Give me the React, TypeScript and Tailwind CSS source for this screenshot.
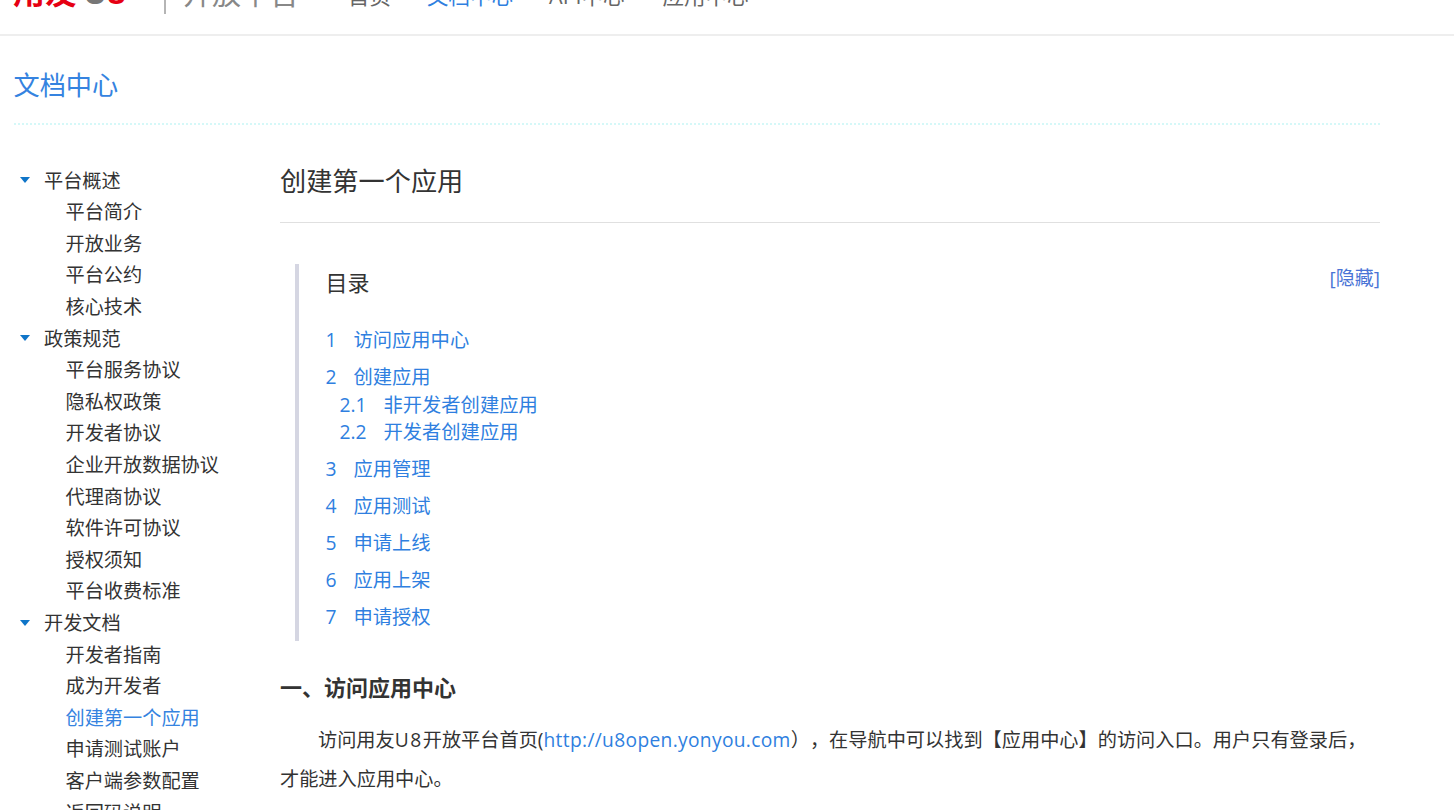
const font = "font-['Open_Sans','Noto_Sans_CJK_SC',sans-serif]"

const navItems = [
  { name: '首页', cls: 'mr-[36px]' },
  { name: '文档中心', cls: 'text-[#2f7fe0] mr-[36px]' },
  { name: 'API中心', cls: 'mr-[38px]' },
  { name: '应用中心', cls: '' },
]

const sideGroups = [
  { title: '平台概述', items: ['平台简介', '开放业务', '平台公约', '核心技术'] },
  { title: '政策规范', items: ['平台服务协议', '隐私权政策', '开发者协议', '企业开放数据协议', '代理商协议', '软件许可协议', '授权须知', '平台收费标准'] },
  { title: '开发文档', items: ['开发者指南', '成为开发者', '创建第一个应用', '申请测试账户', '客户端参数配置', '返回码说明'] },
]

const tocItems = [
  { no: '1', name: '访问应用中心', cls: 'h-[37px]' },
  { no: '2', name: '创建应用', cls: 'h-[28px] mt-[4px]' },
  { no: '2.1', name: '非开发者创建应用', sub: true, cls: 'h-[26px] mt-[1px]' },
  { no: '2.2', name: '开发者创建应用', sub: true, cls: 'h-[28px]' },
  { no: '3', name: '应用管理', cls: 'h-[38px] mt-[4px]' },
  { no: '4', name: '应用测试', cls: 'h-[37px]' },
  { no: '5', name: '申请上线', cls: 'h-[37px]' },
  { no: '6', name: '应用上架', cls: 'h-[37px]' },
  { no: '7', name: '申请授权', cls: 'h-[37px]' },
]

function Header() {
  return (
    <div className="h-[36px] border-b-2 border-[#eeeeee] overflow-hidden">
      {/* page is scrolled, only the lower part of the header row shows */}
      <div className="flex items-center h-[48px] -mt-[29px] pl-[13px]">
        <div className="w-[151px] flex items-center text-[32px] font-bold leading-none -mt-[6px]">
          <span className="text-[#e60012]">用友</span>
          <span className="text-[#777777] ml-[6px]">U</span>
          <span className="text-[#e60012]">8</span>
        </div>
        <div className="w-[2px] h-[38px] bg-[#b5b5b5]"></div>
        <div className="ml-[17px] w-[165px] text-[29px] text-[#888888] leading-none -mt-[3px]">开放平台</div>
        <div className="flex text-[21.5px] leading-none text-[#666666] mt-[1px]">
          {navItems.map((item) => (
            <span key={item.name} className={item.cls}>{item.name}</span>
          ))}
        </div>
      </div>
    </div>
  )
}

function Sidebar() {
  return (
    <div className="w-[266px] shrink-0 pt-[39.7px] text-[19.2px] text-[#333333]">
      {sideGroups.map((group) => (
        <div key={group.title}>
          <div className="h-[31.6px] leading-[31.6px] flex items-center pl-[6px]">
            <span className="w-0 h-0 border-x-[5px] border-x-transparent border-t-[6px] border-t-[#0f75c8] mr-[14px]"></span>
            <span>{group.title}</span>
          </div>
          {group.items.map((item) => (
            <div
              key={item}
              className={`h-[31.6px] leading-[31.6px] pl-[51.5px] ${item === '创建第一个应用' ? 'text-[#3583e0]' : ''}`}
            >
              {item}
            </div>
          ))}
        </div>
      ))}
    </div>
  )
}

function Toc() {
  return (
    <div className="relative mt-[41px] ml-[15px] h-[377px] border-l-4 border-[#d5d6e2] pl-[26.5px]">
      <a className="absolute right-0 top-0 text-[19px] text-[#4a74d6]">[隐藏]</a>
      <div className="text-[22px] text-[#333333] leading-[36px]">目录</div>
      <div className="mt-[22px] text-[19.3px] text-[#2f7fe0]">
        {tocItems.map((item) => (
          <div key={item.no} className={`flex items-center ${item.cls} ${item.sub ? 'pl-[14px]' : ''}`}>
            <span className={item.sub ? 'w-[44px]' : 'w-[28px]'}>{item.no}</span>
            <span>{item.name}</span>
          </div>
        ))}
      </div>
    </div>
  )
}

export default function App() {
  return (
    <div className={`h-[810px] overflow-hidden bg-white ${font}`}>
      <Header />
      <div className="w-[1366px] ml-[14px]">
        <div className="h-[89px] border-b-2 border-dotted border-[#d5f8f8] flex items-center text-[26.2px] text-[#3583e0] pt-[13px] -ml-[0.5px]">
          文档中心
        </div>
        <div className="flex">
          <Sidebar />
          <div className="flex-1 min-w-0">
            <div className="h-[98px] pt-[34px] border-b border-[#e0e0e0] text-[26.2px] leading-[44px] text-[#333333]">
              创建第一个应用
            </div>
            <Toc />
            <div className="mt-[27px] text-[22px] font-bold text-[#333333] leading-[38px]">一、访问应用中心</div>
            <p className="mt-[14px] text-[19.2px] leading-[39px] text-[#333333] indent-[38px] [text-spacing-trim:space-all]">
              访问用友<span className="tracking-[1.5px]">U8</span>开放平台首页(<span className="text-[#2f7fe0] tracking-[0.33px]">http://u8open.yonyou.com</span>），在导航中可以找到【应用中心】的访问入口。用户只有登录后，<br />才能进入应用中心。
            </p>
          </div>
        </div>
      </div>
    </div>
  )
}
